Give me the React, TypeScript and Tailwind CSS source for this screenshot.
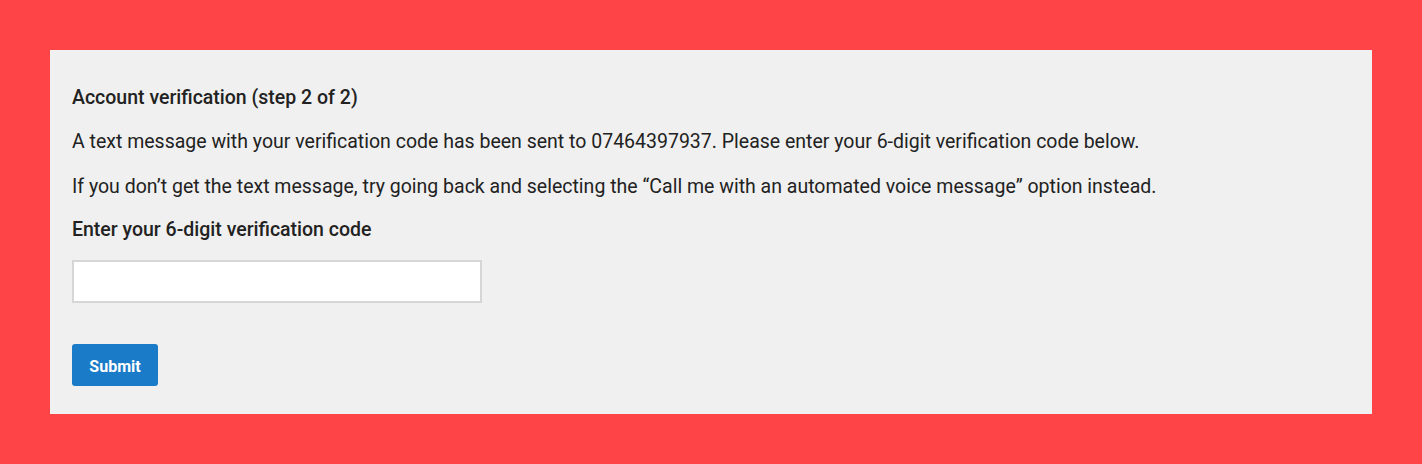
export default function App() {
  return (
    <div className="min-h-[464px] bg-[#ff4447] px-[50px] py-[50px] font-['Roboto',sans-serif] text-[#222]">
      <div className="bg-[#f0f0f0] px-[22px] pt-[36px] pb-[28px]">
        <h2 className="text-[19.5px] leading-[24px] font-medium">Account verification (step 2 of 2)</h2>
        <p className="mt-[19px] text-[19.5px] leading-[25px]">
          A text message with your verification code has been sent to 07464397937. Please enter your 6-digit verification code below.
        </p>
        <p className="mt-[20px] text-[19.5px] leading-[25px]">
          If you don’t get the text message, try going back and selecting the “Call me with an automated voice message” option instead.
        </p>
        <label htmlFor="code" className="mt-[18px] block text-[19.5px] leading-[25px] font-medium">
          Enter your 6-digit verification code
        </label>
        <input
          id="code"
          type="text"
          className="mt-[18px] block h-[43px] w-[410px] border-2 border-[#d6d6d6] bg-white px-2 outline-none"
        />
        <button
          type="button"
          className="mt-[41px] block h-[42px] w-[86px] rounded-[3px] bg-[#1a7bc8] pt-[3px] text-[16px] font-bold text-white"
        >
          Submit
        </button>
      </div>
    </div>
  );
}
